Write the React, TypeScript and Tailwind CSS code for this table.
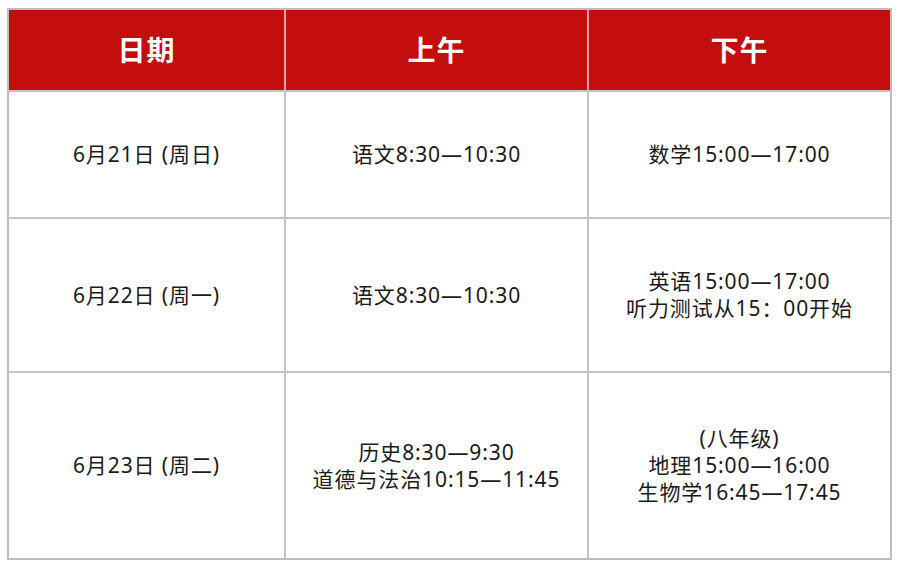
const rows: { date: string; am: string[]; pm: string[]; h: string }[] = [
  { date: "6月21日 (周日)", am: ["语文8:30—10:30"], pm: ["数学15:00—17:00"], h: "h-[127px]" },
  {
    date: "6月22日 (周一)",
    am: ["语文8:30—10:30"],
    pm: ["英语15:00—17:00", "听力测试从15：00开始"],
    h: "h-[154px]",
  },
  {
    date: "6月23日 (周二)",
    am: ["历史8:30—9:30", "道德与法治10:15—11:45"],
    pm: ["(八年级)", "地理15:00—16:00", "生物学16:45—17:45"],
    h: "h-[187px]",
  },
];

function Cell({ lines, last }: { lines: string[]; last?: boolean }) {
  return (
    <div
      className={
        "flex flex-col items-center justify-center text-center text-[21px] leading-[27px] tracking-[0.9px] text-[#1a1a1a] " +
        (last ? "" : "border-r-2 border-[#c4c4c4]")
      }
    >
      {lines.map((l) => (
        <span key={l}>{l}</span>
      ))}
    </div>
  );
}

export default function App() {
  return (
    <div
      className="min-h-[567px] bg-white pt-[8px] pl-[7px]"
      style={{ fontFamily: '"Noto Sans", "Noto Sans CJK SC", sans-serif' }}
    >
      <div className="w-[885px] border-2 border-[#bdbdbd]">
        <div className="grid h-[80px] grid-cols-[277px_303px_1fr] bg-[#c40d0d] text-[28px] font-bold tracking-[1px] text-white">
          <div className="flex items-center justify-center border-r-2 border-[#e9a3a3]">日期</div>
          <div className="flex items-center justify-center border-r-2 border-[#e9a3a3]">上午</div>
          <div className="flex items-center justify-center">下午</div>
        </div>
        {rows.map((r) => (
          <div
            key={r.date}
            className={"grid grid-cols-[277px_303px_1fr] border-t-2 border-[#c4c4c4] " + r.h}
          >
            <Cell lines={[r.date]} />
            <Cell lines={r.am} />
            <Cell lines={r.pm} last />
          </div>
        ))}
      </div>
    </div>
  );
}
